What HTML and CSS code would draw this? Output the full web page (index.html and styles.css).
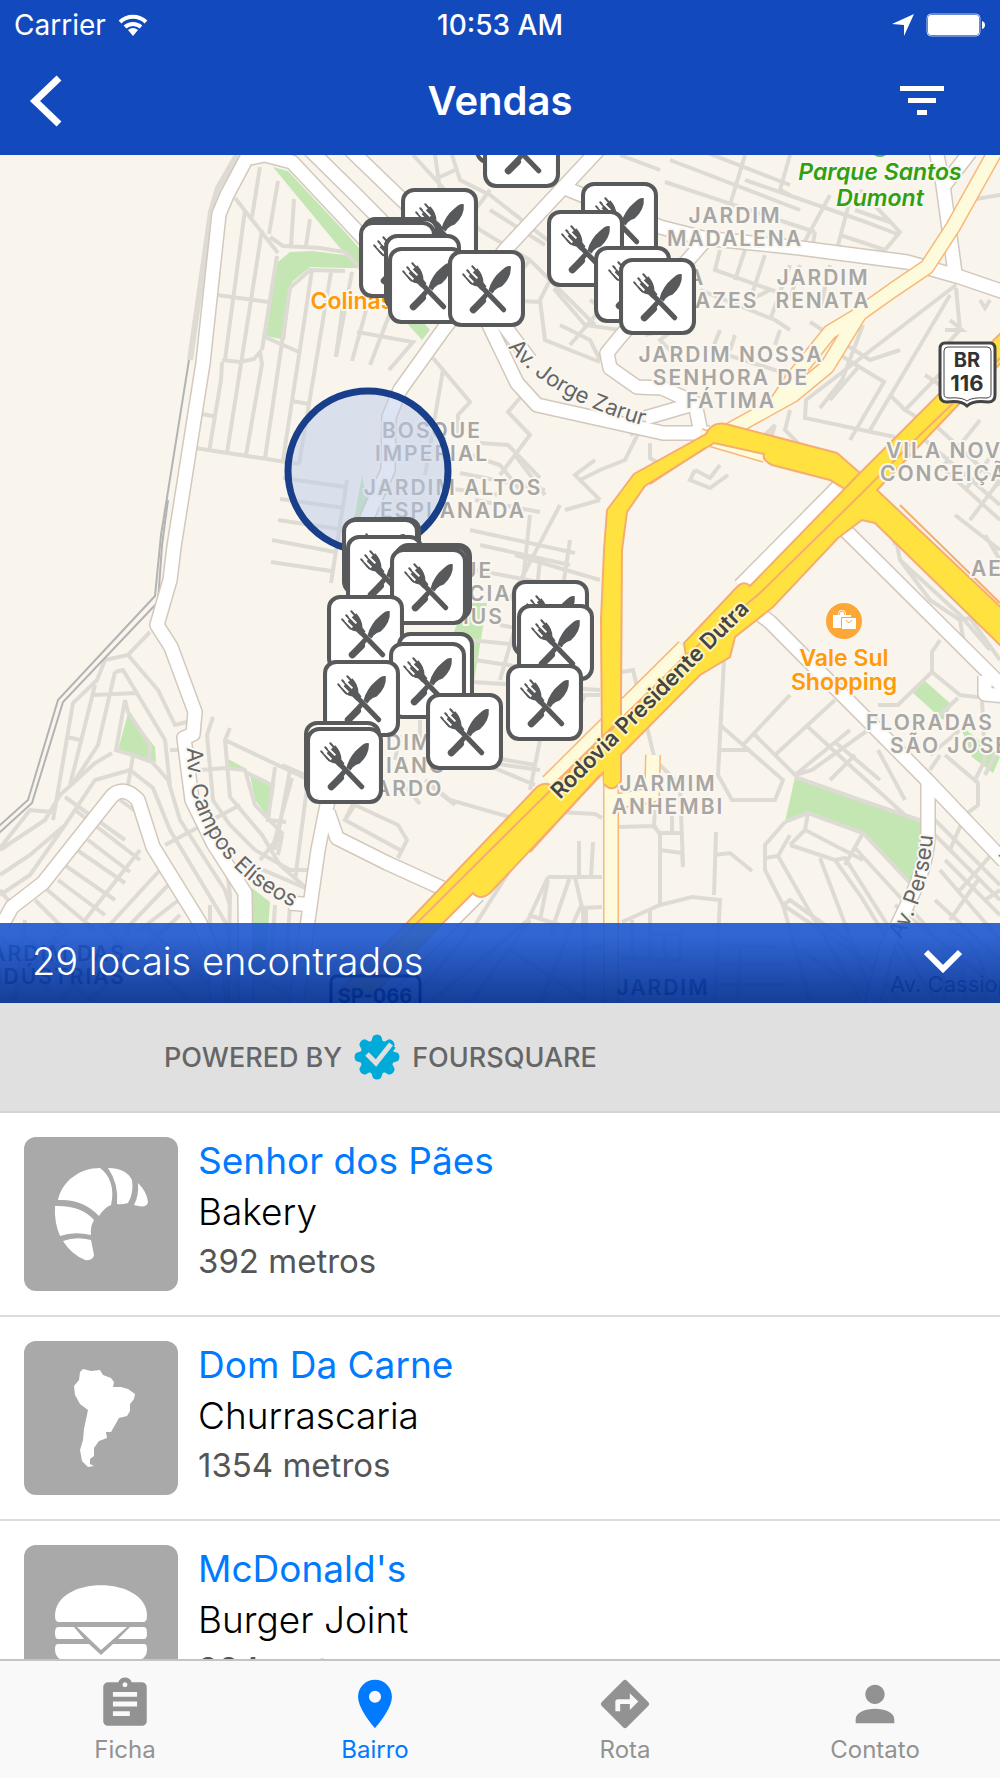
FILE: index.html
```html
<!DOCTYPE html>
<html lang="pt-BR">
<head>
    <meta charset="UTF-8" />
    <meta name="viewport" content="width=device-width, initial-scale=1.0"/>
    <title>Vendas</title>
    <link rel="stylesheet" href="styles.css">
</head>
<body>
    <header class="topo">
        <div class="status">
            <div class="status-lado">
                <span>Carrier</span>
                <svg width="30" height="22" viewBox="0 0 30 22" fill="none" stroke="#fff" stroke-width="4">
                    <path d="M2 8a19 19 0 0 1 26 0M7 13a12 12 0 0 1 16 0"/>
                    <path d="M10 16a8 8 0 0 1 10 0l-5 6z" fill="#fff" stroke="none"/>
                </svg>
            </div>
            <span class="hora">10:53 AM</span>
            <div class="status-lado direita">
                <svg width="22" height="22" viewBox="0 0 22 22" fill="#fff"><path d="M22 0L12 22V11L0 10z"/></svg>
                <svg width="60" height="24" viewBox="0 0 60 24">
                    <rect x="1" y="1" width="53" height="22" rx="4" fill="none" stroke="#fff" stroke-opacity=".7"/>
                    <rect x="2" y="2" width="51" height="20" rx="3" fill="#fff"/>
                    <path d="M56 8q3 1 3 4t-3 4z" fill="#fff"/>
                </svg>
            </div>
        </div>
        <div class="nav">
            <button type="button" class="icone-btn" aria-label="Voltar">
                <svg width="34" height="52" viewBox="0 0 34 52" fill="none" stroke="#fff" stroke-width="7"><path d="M31 3L7 26l24 23"/></svg>
            </button>
            <h1>Vendas</h1>
            <button type="button" class="icone-btn" aria-label="Filtrar">
                <svg width="44" height="32" viewBox="0 0 44 32" fill="#fff"><path d="M0 1h44v5H0zM8 13h28v5H8zM17 25h10v5H17z"/></svg>
            </button>
        </div>
    </header>

    <section class="mapa">
        <svg class="mapa-svg" viewBox="0 155 1000 848" role="img" aria-label="Mapa dos locais">
            <defs>
                <symbol id="local" viewBox="0 0 76 76">
                    <rect x="2" y="2" width="72" height="72" rx="11" fill="#fff" stroke="#58595b" stroke-width="4"/>
                    <g fill="none" stroke="#58595b" stroke-linecap="round">
                        <path d="M31 34L55 59" stroke-width="5"/>
                        <path d="M34 50L25 59" stroke-width="7"/>
                        <path d="M37 45L30 53" stroke-width="5"/>
                        <path d="M15 24l8 9M19 20l8 9M24 16l8 9" stroke-width="2"/>
                    </g>
                    <g fill="#58595b">
                        <path d="M18 28l11-10q6 7 6 14l3 4-5 4-4-4q-7 0-11-8z"/>
                        <path d="M62 16q-4-1-9 4-10 8-13 20l4 3 2-3q3-3 7-4 10-9 9-20z"/>
                    </g>
                    <path d="M18 25l7 7M22 21l7 7" stroke="#fff" stroke-width="2"/>
                </symbol>

                <!-- avenidas brancas -->
                <g id="avenidas" fill="none" stroke-linejoin="round">
                    <path d="M252 148L227 195L219 214L203 363L174 547L170 580L157 625L171 647L195 712L193 734L184 738L192 800L213 843L245 893L246 1005"/>
                    <path d="M250 158L265 155L292 162L352 226L430 310L470 300"/>
                    <path d="M300 140L357 196L440 280"/>
                    <path d="M335 135L480 275L500 320L530 360"/>
                    <path d="M485 315L490 327L517 383L537 405L663 433L710 433"/>
                    <path d="M600 148L505 250L443 330L400 390L389 417L388 470L366 520"/>
                    <path d="M565 188L660 227L703 238L800 248L907 262L960 277L1004 292"/>
                    <path d="M936 150L943 185L955 273M970 152L943 187"/>
                    <path d="M703 243L620 337L607 353L610 368L637 387L662 388L695 403L700 428M645 418L690 405"/>
                    <path d="M838 487L740 586M757 612L770 622L927 780L1004 861M845 530L1004 688M985 676L985 694L1004 696"/>
                    <path d="M928 783L928 833Q928 860 913 893L887 947L872 1005"/>
                    <path d="M328 800L318 850L308 920L296 1005M328 812L337 838L387 863L442 888M290 903L312 905"/>
                    <path d="M2 925L12 907L43 883L112 796Q124 785 138 800L153 847L200 923L215 960L218 1005"/>
                    <path d="M478 895L370 1003"/>
                </g>

                <!-- vias amarelo claro -->
                <g id="vias" fill="none" stroke-linejoin="round">
                    <path d="M996 150L953 227L927 267L893 290L855 317L830 332L793 378L775 405M860 313L827 367L793 395L730 430"/>
                    <path d="M611 780L611 1005M653 755L652 795L612 802"/>
                    <path d="M548 782L684 647M700 436L765 455"/>
                </g>

                <path id="jorge" d="M508 347Q548 402 660 430"/>
                <path id="campos" d="M187 748C187 800 205 872 308 914"/>
                <path id="dutra" d="M560 800L772 588"/>
                <path id="perseu" d="M901 940Q933 885 934 815"/>
            </defs>

            <rect x="0" y="155" width="1000" height="848" fill="#f9f5ed"/>

            <g fill="#c3e6b3">
                <path d="M273 167L288 171L345 232L430 330L422 340L340 248Z"/>
                <path d="M278 262L290 252L312 251L345 255L362 268L345 268L310 267L292 282L285 340L266 336L276 270Z"/>
                <path d="M128 713L155 747L156 762L118 750ZM228 759L245 768L229 770ZM250 775L275 785L269 818L255 800ZM252 888L270 902L266 960L250 992Z"/>
                <path d="M795 777L860 800L922 822L922 850L910 883L863 833L808 813L785 822Z"/>
                <path d="M925 681L952 705L943 720L913 693ZM960 725L1000 757L993 773L972 757Z"/>
                <path d="M362 475L371 520L354 520ZM467 603L487 603L473 687L450 640Z"/>
                <circle cx="880" cy="147" r="10" fill="#5cc244"/>
            </g>

            <!-- ruas -->
            <g class="ruas">
                <path class="larga" d="M237 155L218 188L211 212L190 360"/>
                <path d="M260 167L252 217M278 181L269 234M294 199L291 246M310 219L306 246M245 210L225 360M262 230L227 453M235 198L278 253M217 295L268 302M277 256L262 350M270 237L283 246L320 248L345 252L362 270M345 271L310 270L290 288L265 458M265 337L299 352M222 360L240 362L254 359L260 352L262 364L246 455M222 362L221 380L209 452M201 414L213 416M195 448L299 464M312 270L283 460M331 272L299 464M345 290L336 356M292 401L309 404"/>
                <path d="M283 478L345 487M280 499L345 508M278 520L345 530M272 540L335 552M271 562L331 571M347 480L331 583"/>
                <path d="M352 272L336 357M375 278L352 361M395 300L370 365M357 332L413 342L389 370M433 358L470 402L458 415L458 435M443 370L425 475"/>
                <path d="M413 155L445 190L480 230L530 260L595 325M435 155L440 190M452 155L460 180L490 195L560 250M440 177L455 170M490 190L475 210M490 210L545 245M530 260L510 285M555 270L540 300L545 340L600 362M505 300L540 302M575 270L555 290L585 325L620 330M560 325L590 340L600 360M600 310L570 345M590 300L620 320"/>
                <path d="M520 398L508 412L530 435L515 455L545 495M480 443L508 445L540 478M515 455L500 475M470 455L500 465L520 490M460 473L545 490M445 488L500 495M475 500L540 512M470 530L575 553M480 545L570 565M530 515L520 610M560 505L510 600M515 555L600 580M475 570L555 585M595 460L575 475L600 500M590 490L580 480L600 470L625 460L640 430L630 435M650 443L650 458L670 470M695 470L690 480L710 488L728 475M565 510L600 500M540 560L525 700M570 540L555 640"/>
                <path d="M620 155L660 170M670 160L800 210M665 182L815 232M700 150L790 185M745 155L730 205M790 155L780 190M745 180L860 220L900 235M830 195L800 250M860 190L900 232L885 250L840 235M780 190L790 195M850 200L838 245L850 255M855 210L890 222M815 232L812 250M720 250L715 270L800 300M745 250L735 280M765 255L750 300L770 290M700 290L775 320L790 330M790 265L770 320M800 265L790 300M830 265L820 310M680 325L660 340L675 355M720 330L712 350L800 378M735 335L730 350M810 322L870 360L900 350M645 335L690 325M780 330L775 345M863 325L842 380L820 408M840 355L884 382L850 440M860 365L830 400"/>
                <path d="M956 285L806 400L805 418L895 437M956 288L960 330L946 345M950 295L870 430M968 345L905 410L930 425M950 320L962 330L945 330M980 300L985 308L990 300M905 410L890 395M790 410L785 430L800 445M970 200L1000 195M765 435L775 425L770 440M695 470L710 478L720 465M925 375L940 385M875 490L885 500L895 545"/>
                <path d="M935 425L1000 485M925 440L1000 505M980 420L940 470M1000 445L965 490M1000 480L970 520M955 515L1000 550M985 535L1000 560M945 470L1000 520M890 510L900 560L930 600L960 620L965 650M900 560L960 615L990 650M890 525L885 500M960 620L970 618L1000 660M940 640L932 652L932 672L898 705L878 705M932 672L960 695L985 698M958 698L940 715M982 700L985 760L975 780M945 755L978 783L978 805L965 815M960 730L930 755M1000 745L985 775M940 755L930 770"/>
                <path d="M724 660L718 775L732 800L775 800L783 780L720 725M718 750L750 750M743 745L790 695M755 735L795 775L812 770M775 755L835 700M795 775L850 730M812 770L868 730M808 727L855 770L905 815M835 742L880 780M855 755L830 780M878 750L905 800M795 777L860 800L925 822M785 822L808 813L863 833L910 883M785 822L765 845L765 870L783 905L810 1000M808 813L805 830L863 860M765 858L778 856L790 835M778 856L860 1000M790 845L835 860L860 895L900 960M805 830L790 845M820 858L870 990M835 860L845 858L935 1000M863 833L845 865M855 848L930 930M783 905L865 960L900 1000M783 905L790 900L860 950"/>
                <path d="M925 810L1000 885M935 835L1000 900M945 860L1000 915M965 815L950 850M978 880L950 920M1000 845L960 890M940 870L1000 940M935 900L1000 960M1000 890L985 900M940 950Q965 935 965 1000M950 930Q990 950 985 1000M920 960Q945 950 945 1000M895 905L1000 990"/>
                <path d="M622 672L633 670L655 760M660 765L680 785L683 865M655 810L654 825L660 835L660 905M618 827L653 826L660 833L683 833M672 815L672 833M660 850L682 853L683 867M716 832L714 895M714 855L730 853L752 871M622 922L660 905L692 897L720 900L715 1000M632 920L632 960M650 910L650 960M650 934L680 934L680 960L620 958M665 935L665 960M720 945L775 947M740 947L738 1000M720 965L785 965M720 985L785 985M800 950L880 1003"/>
                <path d="M579 841L579 877M593 842L591 877M548 877L602 877M548 877L528 920L430 1003M570 877L550 935M548 880L540 920M575 877L583 912L585 1000M602 907L580 908L570 930L540 1003M528 915L560 925M586 908L586 950L602 945M510 870L475 925L420 990M560 812L595 814L602 818M510 950L585 1000M530 920L470 1003"/>
                <path d="M420 720L420 745L535 765M400 735L395 760M425 780L450 800L520 820M400 780L420 804M540 740L530 790M460 710L470 760M600 695L585 695L575 715M470 760L540 770M455 805L430 785M500 625L580 640M520 610L500 680M470 640L520 645M475 660L540 670M472 682L600 690M470 765L480 762L535 785M355 805L345 820L400 850M355 805L398 825L407 840L398 858M345 820L355 800M282 765L310 777M292 778L272 850M308 780L295 880M290 770L275 850"/>
                <path d="M105 660L128 655L150 632M128 655L158 690L175 725L187 722M105 660L97 680L73 703L53 820M95 685L70 785M115 672L123 670L165 740L170 785M115 672L98 745L72 785M94 695L136 693M125 700L116 750L133 755L152 762L168 780L180 820L225 890L230 905M125 700L128 712L150 745L149 762M67 737L80 740M170 750L178 750M112 753L95 763L60 795L45 820L0 850M0 875L30 855L65 825L95 780L130 770L153 788L170 830L200 880L230 930M133 756L128 785M52 812L30 810L0 848M0 895L30 875L65 825"/>
                <path d="M65 797L125 840M75 810L140 860M88 840L130 872M77 850L125 883M66 866L115 900M58 880L105 915M45 888L95 930M35 900L70 935M120 800L145 818M140 850L85 920M160 870L105 930M165 845L240 805M173 880L125 930M185 895L140 930M25 920L15 1000M60 930L10 1000M100 925L190 1000M130 930L60 1000M20 930L90 1000M180 915L90 1000M0 935L50 990M35 960L70 930M145 925L215 990M0 890L12 905"/>
                <path d="M213 717L207 735L213 800L230 825L255 850L290 870L308 870M230 728L225 740L230 797L262 835L280 865L305 887M200 770L225 768L245 770L255 805L282 833L260 860M225 740L305 778M245 772L272 785M275 767L268 820L286 822M282 835L278 855M227 870L230 895L228 1000M210 905L210 980M275 905L270 980M290 905L285 980M240 860L310 890M230 960L288 995"/>
            </g>

            <g class="trilho">
                <path d="M245 155L214 210M189 360L161 535L155 596L58 700L28 800L-2 827"/>
                <path d="M168 500L162 545L158 602L63 702L32 803L-2 834"/>
            </g>

            <use href="#avenidas" class="avenida-borda"/>
            <use href="#avenidas" class="avenida"/>
            <use href="#vias" class="via-borda"/>
            <use href="#vias" class="via"/>

            <!-- rodovias -->
            <g class="rodovia">
                <path d="M602 745L601 620L604 550L607 510L634 474L706 434Q712 421 726 424L837 453L860 473L845 489L830 480L772 465Q762 460 764 454L714 443L645 486L627 512L622 550L621 700L621 781Q613 794 604 784Z"/>
                <path d="M338 992L407 923L537 787Q544 781 552 786L603 736L686 656L684 643L737 587Q744 580 750 586L860 473L940 393L1006 328L1006 358L960 403L877 490L1006 612L1006 651L875 523L862 520L838 538L773 607L735 637L730 657L700 675L602 774L490 893Q480 901 473 893L443 923L370 998Z"/>
            </g>
            <path class="miolo" d="M604 740L620 724V776L604 784Z"/>
            <g class="faixa">
                <path d="M370 971L417 923L600 741L683 658L760 593L860 495L920 435L1000 358"/>
                <path d="M530 852L600 775M650 484L705 448M900 505L1000 603"/>
            </g>

            <!-- nomes dos bairros -->
            <g class="bairro meio">
                <text x="735" y="223">JARDIM</text><text x="735" y="246">MADALENA</text>
                <text x="823" y="285">JARDIM</text><text x="823" y="308">RENATA</text>
                <text x="731" y="362">JARDIM NOSSA</text><text x="731" y="385">SENHORA DE</text><text x="731" y="408">FÁTIMA</text>
                <text x="432" y="438">BOSQUE</text><text x="432" y="461">IMPERIAL</text>
                <text x="453" y="495">JARDIM ALTOS</text><text x="453" y="518">ESPLANADA</text>
                <text x="668" y="791">JARMIM</text><text x="668" y="814">ANHEMBI</text>
                <text x="663" y="995" class="coberto">JARDIM</text>
            </g>
            <g class="bairro">
                <text x="688" y="285">A</text><text x="695" y="308">AZES</text>
                <text x="461" y="578">UE</text><text x="469" y="601">CIA</text><text x="463" y="624">IUS</text>
                <text x="386" y="750">DIM</text><text x="386" y="773">IANO</text><text x="375" y="796">ARDO</text>
                <text x="866" y="730">FLORADAS</text><text x="890" y="753">SÃO JOSÉ</text>
                <text x="886" y="458">VILA NOVA</text><text x="880" y="481">CONCEIÇÃO</text>
                <text x="971" y="576">AE</text>
            </g>
            <g class="bairro fim coberto">
                <text x="126" y="961">JARDIM DAS</text><text x="126" y="984">INDÚSTRIAS</text>
            </g>

            <g class="rua-nome">
                <text><textPath href="#jorge">Av. Jorge Zarur</textPath></text>
                <text><textPath href="#campos">Av. Campos Elíseos</textPath></text>
                <text><textPath href="#perseu">Av. Perseu</textPath></text>
                <text x="890" y="992" class="coberto">Av. Cassiopeia</text>
                <text x="998" y="855" transform="rotate(45 998 855)">Av.</text>
                <text class="forte"><textPath href="#dutra">Rodovia Presidente Dutra</textPath></text>
            </g>

            <g class="ponto">
                <text class="parque" x="880" y="180">Parque Santos</text>
                <text class="parque" x="880" y="206">Dumont</text>
                <text x="844" y="666">Vale Sul</text>
                <text x="844" y="690">Shopping</text>
                <text x="352" y="309">Colinas</text>
            </g>
            <circle cx="844" cy="621" r="18" fill="#fda736"/>
            <path d="M833 615H838Q838 610 842 610T846 615H851V617H841V628H833Z" fill="#fff"/>
            <path d="M842 618H856V629H842Z" fill="#fff"/>
            <path d="M846 620q3 5 6 0M839 615q0-4 3-4t3 4" fill="none" stroke="#fda736" stroke-width="1"/>

            <!-- placas -->
            <g class="placa">
                <path d="M945 343H990Q995 343 995 349V395Q995 402 988 402Q973 400 967 406Q961 400 947 402Q940 402 940 395V349Q940 343 945 343Z"/>
                <path class="fina" d="M948 347H987Q991 347 991 351V394Q991 398 986 398Q972 397 967 401Q962 397 949 398Q944 398 944 394V351Q944 347 948 347Z"/>
                <text x="967" y="367">BR</text>
                <text x="967" y="391" class="numero">116</text>
            </g>
            <g class="placa vazada">
                <rect x="331" y="976" width="89" height="40" rx="6"/>
                <text x="375" y="1003">SP-066</text>
            </g>

            <circle cx="368" cy="471" r="80" fill="#bccbea" fill-opacity=".5" stroke="#1a3f8a" stroke-width="7"/>

            <!-- locais -->
            <g>
                <use href="#local" x="475" y="87" width="77" height="77"/>
                <use href="#local" x="483" y="111" width="77" height="77"/>
                <use href="#local" x="581" y="182" width="77" height="77"/>
                <use href="#local" x="401" y="188" width="77" height="77"/>
                <use href="#local" x="547" y="210" width="77" height="77"/>
                <use href="#local" x="366" y="219" width="77" height="77"/>
                <use href="#local" x="362" y="217" width="77" height="77"/>
                <use href="#local" x="359" y="221" width="77" height="77"/>
                <use href="#local" x="384" y="234" width="77" height="77"/>
                <use href="#local" x="594" y="246" width="77" height="77"/>
                <use href="#local" x="388" y="247" width="77" height="77"/>
                <use href="#local" x="448" y="250" width="77" height="77"/>
                <use href="#local" x="619" y="258" width="77" height="77"/>
                <use href="#local" x="344" y="517" width="77" height="77"/>
                <use href="#local" x="342" y="518" width="77" height="77"/>
                <use href="#local" x="346" y="535" width="77" height="77"/>
                <use href="#local" x="395" y="543" width="77" height="77"/>
                <use href="#local" x="393" y="545" width="77" height="77"/>
                <use href="#local" x="390" y="548" width="77" height="77"/>
                <use href="#local" x="512" y="580" width="77" height="77"/>
                <use href="#local" x="327" y="595" width="77" height="77"/>
                <use href="#local" x="517" y="604" width="77" height="77"/>
                <use href="#local" x="397" y="632" width="77" height="77"/>
                <use href="#local" x="389" y="642" width="77" height="77"/>
                <use href="#local" x="323" y="660" width="77" height="77"/>
                <use href="#local" x="506" y="664" width="77" height="77"/>
                <use href="#local" x="426" y="693" width="77" height="77"/>
                <use href="#local" x="304" y="721" width="77" height="77"/>
                <use href="#local" x="306" y="727" width="77" height="77"/>
            </g>
        </svg>

        <button type="button" class="resultado">
            <span>29 locais encontrados</span>
            <svg width="38" height="24" viewBox="0 0 38 24" fill="none" stroke="#fff" stroke-width="6"><path d="M2 3l17 17L36 3"/></svg>
        </button>
    </section>

    <div class="powered">
        <span>POWERED BY</span>
        <svg width="46" height="46" viewBox="0 0 46 46">
            <g fill="#00aad9">
                <circle cx="23" cy="23" r="17"/>
                <path id="dente" d="M17 8l2-6q4-3 8 0l2 6v30l-2 6q-4 3-8 0l-2-6z"/>
                <use href="#dente" transform="rotate(45 23 23)"/>
                <use href="#dente" transform="rotate(90 23 23)"/>
                <use href="#dente" transform="rotate(135 23 23)"/>
            </g>
            <path d="M14 22l9 9L38 11" fill="none" stroke="#00aad9" stroke-width="9"/>
            <path d="M13 20l9 9L37 10" fill="none" stroke="#e0e0e0" stroke-width="5"/>
        </svg>
        <span>FOURSQUARE</span>
    </div>

    <main class="lista">
        <article class="item">
            <svg class="foto" viewBox="0 0 154 154" fill="#fff">
                <path d="M34 63C38 44 56 31 76 31C86 38 91 52 87 68C82 70 78 74 75 79C64 67 50 62 34 63Z"/>
                <path d="M84 31Q102 31 108 43Q110 56 104 66Q98 68 93 67Q95 47 84 31Z"/>
                <path d="M114 46Q123 55 124 65Q123 72 110 68Q115 59 114 46Z"/>
                <path d="M31 69Q57 68 70 83Q66 90 67 98Q50 94 36 99Q30 85 31 69Z"/>
                <path d="M39 104Q52 99 67 103L70 118Q69 124 61 123Q47 117 39 104Z"/>
            </svg>
            <div class="dados">
                <a href="#" class="nome">Senhor dos Pães</a>
                <p class="tipo">Bakery</p>
                <p class="distancia">392 metros</p>
            </div>
        </article>
        <article class="item">
            <svg class="foto" viewBox="0 0 154 154" fill="#fff">
                <path d="M56 31L59 28L67 30L76 29L79 34L87 37L90 41L89 46L97 46L104 48L111 53L110 58L106 63L106 70L103 75L95 77L91 84L87 91L82 91L83 97L75 100L70 107L70 115L66 118L66 123L70 125L64 126L58 120L56 109L59 99L60 88L64 69L56 63L51 54L50 45L55 39Z"/>
            </svg>
            <div class="dados">
                <a href="#" class="nome">Dom Da Carne</a>
                <p class="tipo">Churrascaria</p>
                <p class="distancia">1354 metros</p>
            </div>
        </article>
        <article class="item">
            <svg class="foto" viewBox="0 0 154 154" fill="#fff">
                <path d="M31 71C31 30 123 30 123 71Q123 77 119 77H35Q31 77 31 71Z"/>
                <path d="M34 82H50L60 94H34Q31 94 31 88T34 82ZM53 82H103L77 105ZM106 82H120Q123 82 123 88T120 94H94ZM34 99H65L77 110L89 99H120Q123 99 123 104Q123 115 112 115H42Q31 115 31 104Q31 99 34 99Z"/>
            </svg>
            <div class="dados">
                <a href="#" class="nome">McDonald's</a>
                <p class="tipo">Burger Joint</p>
                <p class="distancia">984 metros</p>
            </div>
        </article>
    </main>

    <nav class="abas">
        <a href="#" class="aba">
            <svg width="58" height="58" viewBox="0 0 24 24"><path d="M19 3h-4.200C14.400 1.800 13.300 1 12 1s-2.400.8-2.800 2H5c-1.100 0-2 .9-2 2v14c0 1.100.9 2 2 2h14c1.100 0 2-.9 2-2V5c0-1.100-.9-2-2-2zm-7 0c.6 0 1 .4 1 1s-.4 1-1 1-1-.4-1-1 .4-1 1-1zm2 14H7v-2h7v2zm3-4H7v-2h10v2zm0-4H7V7h10v2z"/></svg>
            <span>Ficha</span>
        </a>
        <a href="#" class="aba ativa">
            <svg width="58" height="58" viewBox="0 0 24 24"><path d="M12 2C8.100 2 5 5.100 5 9c0 5.300 7 13 7 13s7-7.700 7-13c0-3.900-3.100-7-7-7zm0 9.500a2.500 2.500 0 0 1 0-5 2.500 2.500 0 0 1 0 5z"/></svg>
            <span>Bairro</span>
        </a>
        <a href="#" class="aba">
            <svg width="58" height="58" viewBox="0 0 24 24"><path d="M21.700 11.300l-9-9a1 1 0 0 0-1.400 0l-9 9a1 1 0 0 0 0 1.400l9 9a1 1 0 0 0 1.400 0l9-9a1 1 0 0 0 0-1.400zM14 14.500V12h-4v3H8v-4c0-.6.4-1 1-1h5V7.500l3.500 3.500-3.500 3.500z"/></svg>
            <span>Rota</span>
        </a>
        <a href="#" class="aba">
            <svg width="58" height="58" viewBox="0 0 24 24"><path d="M12 12c2.200 0 4-1.800 4-4s-1.800-4-4-4-4 1.800-4 4 1.800 4 4 4zm0 2c-4 0-8 1.500-8 4.500V20h16v-1.500c0-3-4-4.500-8-4.500z"/></svg>
            <span>Contato</span>
        </a>
    </nav>
</body>
</html>
```
FILE: styles.css
```css
* {
    box-sizing: border-box;
}

body {
    background-color: #fff;
    color: #000;
    font-family: Inter, "Liberation Sans", sans-serif;
    margin: 0;
    height: 100vh;
    display: flex;
    flex-direction: column;
    overflow: hidden;
}

h1, p {
    margin: 0;
}

a {
    text-decoration: none;
}

svg {
    display: block;
    flex-shrink: 0;
}

button {
    background: none;
    border: none;
    padding: 0;
    font-family: inherit;
    cursor: pointer;
}

.topo {
    background-color: #124abd;
    color: #fff;
    flex-shrink: 0;
}

.status {
    display: flex;
    align-items: center;
    height: 50px;
    padding: 0 14px;
    font-size: 28px;
}

.status-lado {
    display: flex;
    align-items: center;
    gap: 12px;
    flex: 1;
}

.direita {
    justify-content: flex-end;
}

.hora {
    font-weight: 500;
}

.nav {
    display: grid;
    grid-template-columns: 1fr auto 1fr;
    align-items: center;
    height: 105px;
    padding: 0 28px 4px;
}

.nav h1 {
    font-size: 40px;
    font-weight: 600;
}

.icone-btn {
    justify-self: start;
}

.icone-btn:last-child {
    justify-self: end;
    padding-right: 28px;
}

/* mapa */
.mapa {
    position: relative;
    flex-shrink: 0;
}

.mapa-svg {
    width: 100%;
    height: auto;
}

.ruas {
    fill: none;
    stroke: #dedbd4;
    stroke-width: 4;
}

.larga {
    stroke-width: 6;
}

.trilho {
    fill: none;
    stroke: #b3b3b3;
    stroke-width: 2;
}

.avenida-borda {
    stroke: #d3c8bd;
    stroke-width: 16;
}

.avenida {
    stroke: #fff;
    stroke-width: 13;
}

.via-borda {
    stroke: #f9b877;
    stroke-width: 16;
}

.via {
    stroke: #fdfbdc;
    stroke-width: 13;
}

.rodovia {
    fill: #ffe140;
    stroke: #f6ad70;
    stroke-width: 2;
}

.miolo {
    fill: #ffe140;
}

.faixa {
    fill: none;
    stroke: #f6ad70;
    stroke-width: 2;
}

.mapa text {
    paint-order: stroke;
    stroke: #faf7f1;
    stroke-width: 4;
    stroke-linejoin: round;
}

.bairro {
    font-size: 21px;
    font-weight: 600;
    letter-spacing: 2px;
    fill: #a8a6a3;
}

.meio, .ponto, .placa {
    text-anchor: middle;
}

.fim {
    text-anchor: end;
}

.rua-nome {
    font-size: 22px;
    fill: #666;
}

.rua-nome .forte {
    font-weight: 600;
    fill: #444;
    stroke: #fdf3c0;
}

.ponto {
    font-size: 23px;
    font-weight: 600;
    fill: #ff9a0a;
}

.parque {
    fill: #30a010;
    font-style: italic;
}

.placa {
    fill: #fff;
    stroke: #444;
    stroke-width: 3;
    font-size: 20px;
    font-weight: 700;
}

.placa .fina {
    stroke-width: 1;
}

.placa text {
    fill: #333;
    stroke: none;
}

.placa .numero {
    font-size: 22px;
}

.vazada {
    fill: none;
    stroke: #000;
}

.vazada text {
    fill: #000;
}

/* nomes que ficam embaixo da barra azul */
.coberto {
    fill: #444;
}

.mapa text.coberto, .coberto text {
    stroke: none;
}

.resultado {
    position: absolute;
    left: 0;
    right: 0;
    bottom: 0;
    display: flex;
    align-items: center;
    justify-content: space-between;
    width: 100%;
    height: 80px;
    padding: 0 38px 4px 32px;
    color: #fff;
    font-size: 38px;
    font-weight: 300;
    background: linear-gradient(rgba(30, 88, 208, 0.91) 15%, rgba(0, 46, 145, 0.92));
}

/* lista */
.powered {
    display: flex;
    align-items: center;
    gap: 12px;
    flex-shrink: 0;
    height: 110px;
    padding-left: 164px;
    background-color: #e0e0e0;
    border-bottom: 2px solid #d4d4d4;
    color: #666;
    font-size: 27px;
    font-weight: 500;
}

.lista {
    flex: 1;
    min-height: 0;
    overflow-y: auto;
    scrollbar-width: none;
}

.item {
    display: flex;
    gap: 20px;
    padding: 24px;
    border-bottom: 2px solid #dcdcdc;
}

.foto {
    width: 154px;
    height: 154px;
    border-radius: 12px;
    background-color: #a9a9a9;
}

.nome {
    display: block;
    color: #007aff;
    font-size: 37px;
    line-height: 48px;
}

.tipo {
    font-size: 37px;
    font-weight: 300;
    line-height: 54px;
}

.distancia {
    color: #555;
    font-size: 33px;
    line-height: 44px;
}

.abas {
    display: flex;
    flex-shrink: 0;
    height: 119px;
    padding-top: 14px;
    background-color: #f9f9f9;
    border-top: 2px solid #c4c4c4;
}

.aba {
    flex: 1;
    display: flex;
    flex-direction: column;
    align-items: center;
    color: #929292;
    font-size: 24px;
    line-height: 34px;
}

.aba svg {
    fill: currentColor;
}

.ativa {
    color: #007aff;
}
```
